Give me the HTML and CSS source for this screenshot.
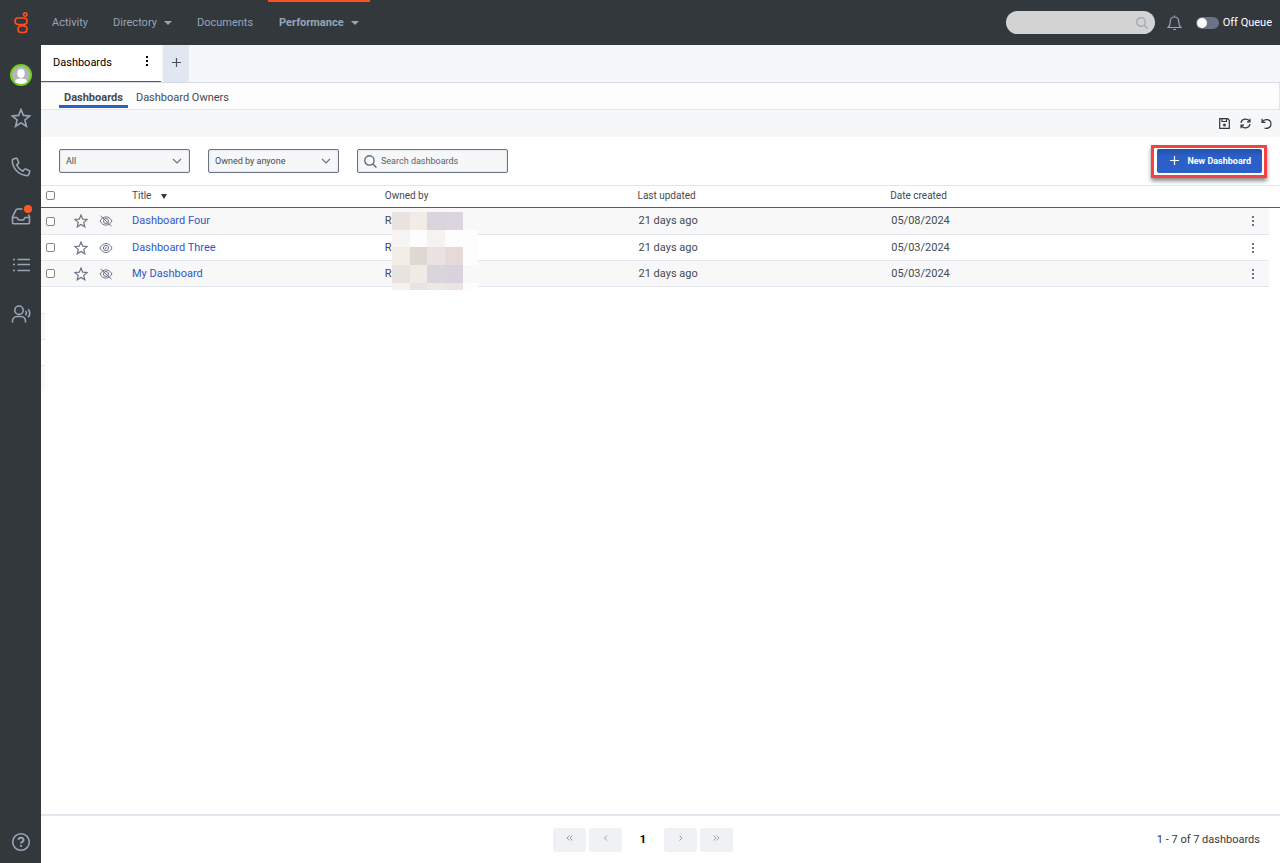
FILE: index.html
```html
<!DOCTYPE html>
<html lang="en">
<head>
<meta charset="utf-8">
<title>Dashboards</title>
<link rel="stylesheet" href="styles.css">
</head>
<body>
<svg class="defs" aria-hidden="true">
  <symbol id="star" viewBox="0 0 20 20"><path d="M10 1.500l2.400 5.900 6.400.5-4.900 4.100 1.500 6.300-5.400-3.400-5.400 3.400 1.500-6.300-4.900-4.100 6.400-.5z"/></symbol>
  <symbol id="eye" viewBox="0 0 14 12"><path d="M1 6c3-6 9-6 12 0-3 6-9 6-12 0z"/><circle cx="7" cy="6" r="2.600"/><path d="M7 5v1.500h-1"/></symbol>
  <symbol id="eye-off" viewBox="0 0 14 12"><path d="M1 6c3-5.500 9-5.500 12 0-3 5.500-9 5.500-12 0zM1.500.8l11 10.400"/><circle cx="7" cy="6" r="2.500"/></symbol>
  <symbol id="dots" viewBox="0 0 2 10"><path d="M0 0h2v2H0zM0 4h2v2H0zM0 8h2v2H0z"/></symbol>
  <symbol id="chevron" viewBox="0 0 10 6"><path d="M1 1l4 4 4-4"/></symbol>
  <symbol id="search" viewBox="0 0 12 12"><circle cx="5" cy="5" r="4.300"/><path d="M8 8l3.500 3.500"/></symbol>
  <symbol id="plus" viewBox="0 0 9 9"><path d="M4.500 0v9M0 4.500h9"/></symbol>
</svg>
<div class="app">
  <header class="topbar">
    <a class="logo" href="#" aria-label="Home">
      <svg width="14" height="22" viewBox="0 0 14 22"><rect x="1" y="6" width="12" height="6.500" rx="3.200"/><rect x="4" y="14" width="9" height="6.500" rx="3.200"/><circle cx="11.200" cy="2.600" r="1.700"/><path d="M7 12.500v1.500M10 12.500v1.500"/></svg>
    </a>
    <nav class="main-nav">
      <a href="#">Activity</a>
      <a href="#">Directory<span class="caret"></span></a>
      <a href="#">Documents</a>
      <a class="current" href="#">Performance<span class="caret"></span></a>
    </nav>
    <div class="top-search">
      <input type="text" aria-label="Search">
      <svg class="line" width="12" height="12"><use href="#search"/></svg>
    </div>
    <button class="bell" aria-label="Notifications"><svg class="line" width="15" height="16" viewBox="0 0 15 16"><path d="M1 12.500h13c-2-1.500-2.200-3-2.200-5.500 0-3-1.800-5-4.300-5S3.200 4 3.200 7c0 2.500-.2 4-2.200 5.500zM7.500.5V2M6 14.500h3"/></svg></button>
    <label class="queue"><input type="checkbox"><span>Off Queue</span></label>
  </header>
  <div class="body">
    <nav class="sidebar">
      <button class="avatar" aria-label="Profile"><svg width="18" height="18" viewBox="0 0 18 18"><circle cx="9" cy="9" r="9" fill="#b5b5b5"/><ellipse cx="9" cy="7.500" rx="3.700" ry="4.400" fill="#fff"/><path d="M3 16c0-2.500 2.500-3.500 6-3.500s6 1 6 3.500c-3.500 2.500-8.500 2.500-12 0z" fill="#fff"/></svg></button>
      <button class="side" aria-label="Favorites"><svg class="line" width="20" height="20"><use href="#star"/></svg></button>
      <button class="side" aria-label="Calls"><svg class="line" width="20" height="20" viewBox="0 0 20 20"><path d="M2 2.200l2.800-.9c.6-.2 1.200.1 1.400.6l1.400 3.400c.2.500.1 1-.4 1.400L5.600 8c1.300 2.700 3.300 4.800 6.200 6.200l1.400-1.700c.4-.4.900-.6 1.400-.4l3.400 1.500c.5.200.8.800.6 1.300l-.9 2.900c-.2.500-.6.800-1.100.8C8 18.600 1.300 11.500 1.300 3.300c0-.5.300-.9.700-1.100z"/></svg></button>
      <button class="side" aria-label="Inbox"><svg class="line" width="20" height="20" viewBox="0 0 20 20"><path d="M11.500 3H6.500c-.8 0-1.400.4-1.700 1.200L1.500 11v5.500c0 .8.500 1.300 1.300 1.300h14.400c.8 0 1.300-.5 1.300-1.300V11l-1-2.500M1.500 11.500h4.300c.9 0 .9 2.500 2 2.500h4.400c1.100 0 1.100-2.500 2-2.500h4.300"/></svg><span class="dot"></span></button>
      <button class="side" aria-label="Lists"><svg class="line" width="20" height="20" viewBox="0 0 20 20"><path d="M6.500 4.500H19M6.500 9.500H19M6.500 15.500H19M2 4.500h2M2 9.500h2M2 15.500h2"/></svg></button>
      <button class="side" aria-label="Groups"><svg class="line" width="20" height="20" viewBox="0 0 20 20"><circle cx="8" cy="6.200" r="4.200"/><path d="M1.500 18.500v-1c0-3 2-5 4.500-5h4c2.500 0 4.500 2 4.500 5v1M14.500 7c1 1.200 1 3 0 4.200M17.200 5.300c1.800 2.300 1.800 5.600 0 8"/></svg></button>
      <button class="side help" aria-label="Help"><svg class="line" width="20" height="20" viewBox="0 0 20 20"><circle cx="10" cy="10" r="8.300"/><path d="M7.500 7.800c.2-3 5-2.700 5 .2 0 2-2.500 1.600-2.500 3.500M10 13v1.800" stroke-width="2"/></svg></button>
    </nav>
    <main class="page">
      <div class="tabs">
        <div class="tab"><a href="#">Dashboards</a><button aria-label="Tab options"><svg class="solid" width="2" height="10"><use href="#dots"/></svg></button></div>
        <button class="add-tab" aria-label="Add tab"><svg class="line" width="9" height="9"><use href="#plus"/></svg></button>
      </div>
      <nav class="subnav"><a class="current" href="#">Dashboards</a><a href="#">Dashboard Owners</a></nav>
      <div class="toolbar">
        <button aria-label="Save"><svg class="line" width="11" height="11" viewBox="0 0 11 11"><path d="M.7.700h8l1.600 1.600v8H.7zM3 1v2.500h4.500V1"/><circle cx="5.500" cy="7" r=".9"/></svg></button>
        <button aria-label="Refresh"><svg class="line" width="11" height="11" viewBox="0 0 11 11"><path d="M1 4.800C1.500 1 7.500-.6 9.800 3.500M10 6.200C9.500 10 3.500 11.600 1.200 7.500M10 .8v3H7M1 10.200v-3h3"/></svg></button>
        <button aria-label="Undo"><svg class="line" width="11" height="11" viewBox="0 0 11 11"><path d="M1 .8v3.500h3.500M1.200 4C3 .5 10 .5 10 6c0 4-4.500 5-6.500 4"/></svg></button>
      </div>
      <div class="filters">
        <div class="select"><select aria-label="Show"><option>All</option></select><svg class="line" width="10" height="6"><use href="#chevron"/></svg></div>
        <div class="select"><select aria-label="Owner"><option>Owned by anyone</option></select><svg class="line" width="10" height="6"><use href="#chevron"/></svg></div>
        <div class="find"><svg class="line" width="13" height="13" viewBox="0 0 12 12"><use href="#search"/></svg><input type="text" placeholder="Search dashboards" aria-label="Search dashboards"></div>
        <div class="highlight"><button class="primary"><svg class="line" width="9" height="9"><use href="#plus"/></svg>New Dashboard</button></div>
      </div>
      <table class="list">
        <colgroup><col class="c-check"><col class="c-icon"><col class="c-icon"><col class="c-text"><col class="c-text"><col class="c-text"><col><col class="c-menu"><col class="c-end"></colgroup>
        <thead><tr><th><input type="checkbox" aria-label="Select all"></th><th></th><th></th><th class="text">Title<span class="sort"></span></th><th class="text">Owned by</th><th class="text">Last updated</th><th class="text">Date created</th><th></th><th></th></tr></thead>
        <tbody>
          <tr>
            <td><input type="checkbox" aria-label="Select Dashboard Four"></td>
            <td><button aria-label="Favorite"><svg class="line star" width="14" height="14"><use href="#star"/></svg></button></td>
            <td><svg class="line" width="14" height="12"><use href="#eye-off"/></svg></td>
            <td class="text"><a href="#">Dashboard Four</a></td>
            <td class="text owner">R
              <svg class="mosaic" width="86" height="78" viewBox="0 0 86 78" shape-rendering="crispEdges">
                <path fill="#ebe3e1" d="M0 0h18v18H0z"/><path fill="#f1ece6" d="M18 0h17v18H18z"/><path fill="#d8d5dc" d="M35 0h18v18H35z"/><path fill="#dbd5dd" d="M53 0h18v18H53z"/>
                <path fill="#fdfdfd" d="M0 18h86v35H0z"/><path fill="#f7f5f4" d="M0 18h18v17H0z"/><path fill="#f6f2f1" d="M35 18h18v17H35z"/>
                <path fill="#f2ede7" d="M0 35h18v18H0z"/><path fill="#e0d8d2" d="M18 35h17v18H18z"/><path fill="#ebe2e1" d="M35 35h18v18H35z"/><path fill="#e6d9d9" d="M53 35h18v18H53z"/>
                <path fill="#e8e3df" d="M0 53h18v18H0z"/><path fill="#f0ebe5" d="M18 53h17v18H18z"/><path fill="#d8d5dc" d="M35 53h18v18H35z"/><path fill="#dad3dd" d="M53 53h18v18H53z"/><path fill="#f8f8f8" d="M71 53h15v18H71z"/>
                <path fill="#f5f1ed" d="M0 71h18v7H0z"/><path fill="#e6e4e6" d="M18 71h17v7H18z"/><path fill="#ede8e4" d="M35 71h18v7H35z"/><path fill="#eee3e3" d="M53 71h18v7H53z"/><path fill="#fcfdfd" d="M71 71h15v7H71z"/>
              </svg>
            </td>
            <td class="text value">21 days ago</td><td class="text value">05/08/2024</td>
            <td><button aria-label="More"><svg class="solid" width="2" height="10"><use href="#dots"/></svg></button></td><td class="end"></td>
          </tr>
          <tr>
            <td><input type="checkbox" aria-label="Select Dashboard Three"></td>
            <td><button aria-label="Favorite"><svg class="line star" width="14" height="14"><use href="#star"/></svg></button></td>
            <td><svg class="line" width="14" height="12"><use href="#eye"/></svg></td>
            <td class="text"><a href="#">Dashboard Three</a></td><td class="text">R</td>
            <td class="text value">21 days ago</td><td class="text value">05/03/2024</td>
            <td><button aria-label="More"><svg class="solid" width="2" height="10"><use href="#dots"/></svg></button></td><td class="end"></td>
          </tr>
          <tr>
            <td><input type="checkbox" aria-label="Select My Dashboard"></td>
            <td><button aria-label="Favorite"><svg class="line star" width="14" height="14"><use href="#star"/></svg></button></td>
            <td><svg class="line" width="14" height="12"><use href="#eye-off"/></svg></td>
            <td class="text"><a href="#">My Dashboard</a></td><td class="text">R</td>
            <td class="text value">21 days ago</td><td class="text value">05/03/2024</td>
            <td><button aria-label="More"><svg class="solid" width="2" height="10"><use href="#dots"/></svg></button></td><td class="end"></td>
          </tr>
        </tbody>
      </table>
      <div class="stubs"><div></div><div></div><div></div></div>
      <footer class="footer">
        <div class="pager">
          <button aria-label="First page"><svg class="line" width="7" height="6" viewBox="0 0 7 6"><path d="M3.500.5L1 3l2.500 2.500M6.500.5L4 3l2.500 2.500"/></svg></button>
          <button aria-label="Previous page"><svg class="line" width="7" height="6" viewBox="0 0 7 6"><path d="M5 .5L2.500 3 5 5.500"/></svg></button>
          <span class="number">1</span>
          <button aria-label="Next page"><svg class="line" width="7" height="6" viewBox="0 0 7 6"><path d="M2.500.5L5 3 2.500 5.500"/></svg></button>
          <button aria-label="Last page"><svg class="line" width="7" height="6" viewBox="0 0 7 6"><path d="M.5.5L3 3 .5 5.500M3.500.5L6 3 3.500 5.500"/></svg></button>
        </div>
        <span class="count">1 - 7 of 7 dashboards</span>
      </footer>
    </main>
  </div>
</div>
</body>
</html>
```
FILE: styles.css
```css
* { box-sizing: border-box; }
body { margin: 0; font: 11px/16px Roboto, "Liberation Sans", sans-serif; color: #444a52; background: #fff; }
a { color: inherit; text-decoration: none; }
button { display: flex; align-items: center; justify-content: center; border: 0; padding: 0; margin: 0; background: none; color: inherit; font: inherit; cursor: pointer; }
svg { display: block; flex: none; }
.defs { position: absolute; width: 0; height: 0; }
.line { fill: none; stroke: currentColor; stroke-width: 1.2; }
.solid { fill: currentColor; }
.app { min-height: 100vh; display: flex; flex-direction: column; }

.topbar { height: 45px; display: flex; align-items: center; background: #33383d; color: #98a5b7; padding-right: 8px; }
.logo { width: 41px; margin-right: 1px; display: flex; justify-content: center; }
.logo svg { fill: none; stroke: #ff4f1f; stroke-width: 1.6; }
.main-nav { display: flex; gap: 5px; align-self: stretch; flex: 1; }
.main-nav a { display: flex; align-items: center; padding: 0 10px; border-top: 2px solid transparent; border-bottom: 2px solid transparent; }
.main-nav .current { padding: 0 11px; border-top-color: #ff4f1f; font-weight: 700; }
.caret { border: 4px solid transparent; border-top-color: currentColor; border-bottom: 0; margin-left: 7px; }
.top-search { position: relative; width: 149px; }
.top-search input { display: block; width: 100%; height: 23px; border: 0; border-radius: 12px; background: #d3d3d3; padding: 0 24px 0 12px; font: inherit; }
.top-search svg { position: absolute; right: 7px; top: 6px; }
.bell { margin: 0 14px 0 12px; }
.queue { display: flex; align-items: center; gap: 4px; color: #fff; }
.queue input { appearance: none; margin: 0; width: 23px; height: 12px; border-radius: 6px; background: #6b7385; padding: 1px; }
.queue input::before { content: ""; display: block; width: 10px; height: 10px; border-radius: 50%; background: #fff; }

.body { flex: 1; display: flex; }
.sidebar { width: 41px; display: flex; flex-direction: column; align-items: center; padding-top: 19px; background: #33383d; color: #98a5b7; }
.avatar { width: 22px; height: 22px; margin-bottom: 7px; border-radius: 50%; background: #6fd01f; }
.side { position: relative; width: 41px; height: 49px; }
.side .line { stroke-width: 1.6; }
.side.help { margin-top: auto; height: 42px; }
.dot { position: absolute; right: 9px; top: 14px; width: 8px; height: 8px; border-radius: 50%; background: #ff5a26; }

.page { flex: 1; min-width: 0; display: flex; flex-direction: column; }
.tabs { display: flex; gap: 2px; height: 38px; background: #f6f7f9; border-bottom: 1px solid #d5dbe5; }
.tab { display: flex; justify-content: space-between; width: 120px; padding: 0 13px 0 12px; background: #fff; color: #000; border-bottom: 1px solid #2a60c8; line-height: 35px; }
.tab button { height: 32px; }
.add-tab { width: 26px; background: #e2e6f0; color: #4b5260; border-radius: 0 0 3px 3px; padding-bottom: 3px; }
.subnav { display: flex; gap: 3px; height: 27px; padding-left: 18px; background: #fdfdfd; border: 1px solid #e2e6ee; border-top: 0; border-left: 0; line-height: 29px; }
.subnav a { height: 25px; padding: 0 5px; border-bottom: 3px solid transparent; }
.subnav .current { font-weight: 700; border-bottom-color: #2a60c8; }
.toolbar { display: flex; justify-content: flex-end; align-items: center; gap: 10px; height: 27px; padding-right: 8px; background: #f6f7f9; color: #33383d; }

.filters { display: flex; align-items: center; height: 48px; padding: 0 13px 0 18px; gap: 18px; font-size: 9px; }
.select { position: relative; width: 131px; color: #6b7385; }
.select select, .find { display: block; width: 100%; height: 24px; border: 1px solid #6b7385; border-radius: 2px; background: #f6f7f9; box-shadow: inset 0 0 2px #c5cad3; }
.select select { appearance: none; padding: 0 6px; font: inherit; color: #444a52; }
.select svg { position: absolute; right: 8px; top: 9px; }
.filters .find { display: flex; align-items: center; gap: 4px; width: 151px; padding: 0 6px; color: #5a616c; }
.find input { flex: 1; min-width: 0; border: 0; padding: 0; background: none; font: inherit; }
.find input::placeholder { color: #5a616c; opacity: 1; }
.highlight { margin-left: auto; border: 3px solid #f44144; padding: 1px 2px 2px 3px; box-shadow: 0 3px 4px rgba(0, 0, 0, .45); }
.primary { gap: 8px; height: 24px; padding: 0 11px 0 13px; background: linear-gradient(#2350a8, #2a60c8 30%); border-radius: 2px; color: #fff; font-weight: 700; }

.list { width: 100%; table-layout: fixed; border-collapse: separate; border-spacing: 0; }
.c-check { width: 27px; }
.c-icon { width: 25px; }
.c-text { width: 20.4%; }
.c-menu { width: 32px; }
.c-end { width: 11px; }
.list th { height: 23px; padding: 0 0 2px; border-top: 1px solid #e2e6ee; border-bottom: 1px solid #2a60c8; font-size: 10px; font-weight: 400; line-height: 16px; text-align: left; }
.list td { height: 26px; padding: 0; border-bottom: 1px solid #e2e6ee; }
.list tbody tr:first-child td { height: 27px; }
.list tbody tr:nth-child(odd) td { background: #f8f8f8; }
.list tbody .end.end { background: none; border: 0; }
.list .text { padding-left: 14px; }
.list .value { padding-left: 15px; }
.list a { color: #3157c4; }
.list td button { margin: 0 auto; }
.list td > svg { margin: 0 auto; }
.list td .line, .list td .solid { color: #6b7385; }
.list td .line { stroke-width: 1; }
.list td .star { stroke-width: 1.7; }
.list input { appearance: none; display: block; width: 9px; height: 9px; margin: 0 0 0 5px; border: 1px solid #858585; border-radius: 2px; background: #fff; }
.sort { display: inline-block; margin-left: 10px; border: 3px solid transparent; border-top: 5px solid #33383d; border-bottom: 0; }
.owner { position: relative; }
.mosaic.mosaic { position: absolute; left: 21px; top: 4px; z-index: 1; }
.stubs { width: 4px; margin-top: 26px; }
.stubs div { height: 26px; border-top: 1px solid #e2e6ee; }
.stubs div:nth-child(odd) { background: #f8f8f8; }

.footer { margin-top: auto; display: grid; grid-template-columns: 42% auto 1fr; align-items: center; height: 49px; padding-right: 20px; border-top: 2px solid #e2e6ee; }
.pager { grid-column: 2; display: flex; align-items: center; gap: 3px; }
.pager button { width: 33px; height: 24px; background: #f0f1f5; border-radius: 3px; color: #9a9da8; padding-bottom: 3px; }
.pager .line { stroke-width: 1; }
.number { width: 36px; text-align: center; color: #000; font-weight: 700; }
.count { text-align: right; color: #33383d; }
```
